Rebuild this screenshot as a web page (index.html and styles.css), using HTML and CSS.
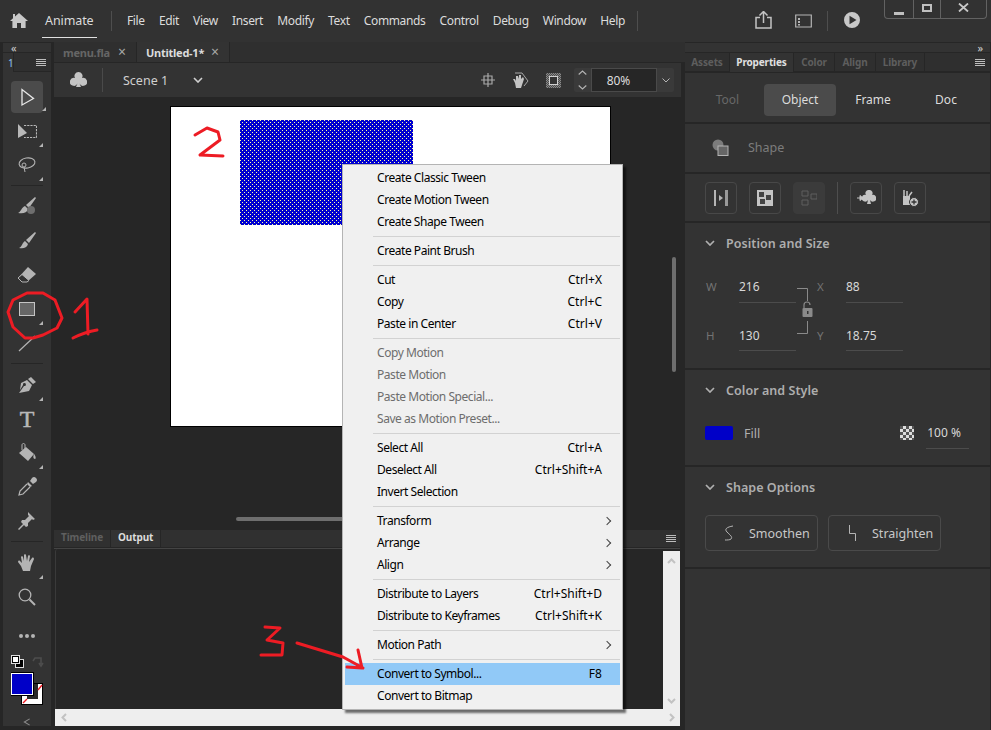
FILE: index.html
```html
<!DOCTYPE html>
<html lang="en">
<head>
<meta charset="utf-8">
<title>Animate</title>
<link rel="stylesheet" href="styles.css">
</head>
<body>
<div class="app">
  <header class="topbar">
    <svg class="home" viewBox="0 0 18 15"><path d="M9 0 L18 8 L15.6 8 L15.6 15 L11 15 L11 10 L7 10 L7 15 L2.4 15 L2.4 8 L0 8 L3 5.3 L3 1 L5 1 L5 3.5 Z"/></svg>
    <div class="brand">Animate</div>
    <span class="vsep first"></span>
    <nav class="menubar">
      <span>File</span><span>Edit</span><span>View</span><span>Insert</span><span>Modify</span><span>Text</span><span>Commands</span><span>Control</span><span>Debug</span><span>Window</span><span>Help</span>
    </nav>
    <span class="vsep"></span>
    <div class="top-right">
      <svg class="ic-share" viewBox="0 0 17 18"><path d="M8.5 0.5 L12.5 4.5 M8.5 0.5 L4.5 4.5 M8.5 1 V12 M5 6.5 H1 V17 H16 V6.5 H12" fill="none" stroke="#c4c4c4" stroke-width="1.5"/></svg>
      <svg class="ic-panel" viewBox="0 0 17 14"><path d="M.7 1 H16.3 V13 H.7 Z" fill="none" stroke="#b4b4b4" stroke-width="1.2"/><path d="M3 4 H5 V6 H3 Z M3 7 H5 V9 H3 Z M3 10 H5 V11.5 H3 Z" fill="#b4b4b4"/></svg>
      <span class="vsep short"></span>
      <svg class="ic-play" viewBox="0 0 16 16"><path fill-rule="evenodd" d="M8 0 A8 8 0 1 1 8 16 A8 8 0 1 1 8 0 Z M5.5 3.8 V12.2 L12.5 8 Z" fill="#c8c8c8"/></svg>
      <div class="winctl">
        <span class="wbtn w-min"><i></i></span>
        <span class="wbtn w-max"><i></i></span>
        <span class="wbtn w-close"><svg viewBox="0 0 11 9" width="11" height="9"><path d="M1 .5 L10 8.5 M10 .5 L1 8.5" stroke="#c8c8c8" stroke-width="1.8" fill="none"/></svg></span>
      </div>
    </div>
  </header>

  <aside class="toolbar">
    <div class="collapse-row left">&#171;</div>
    <div class="tool-tabs"><span class="tool-tab">1</span><span class="tool-tabrest"><i class="burger"></i></span></div>
    <div class="tools">
      <div class="tool sel more"><span class="pill"><svg viewBox="0 0 20 20"><path d="M5 2.5 V18 L16.5 11.5 Z" fill="none" stroke="#e8e8e8" stroke-width="1.3"/></svg></span></div>
      <div class="tool more"><svg viewBox="0 0 20 20"><path d="M1 3 L10 12 L1 17 Z" fill="#b8b8b8"/><path d="M7 4.500 H19.500 V16.500 H7" fill="none" stroke="#b8b8b8" stroke-width="1.1" stroke-dasharray="2.200 1"/></svg></div>
      <div class="tool more"><svg viewBox="0 0 20 20"><ellipse cx="10" cy="8" rx="8" ry="5" transform="rotate(-10 10 8)" fill="none" stroke="#b4b4b4" stroke-width="1.1"/><circle cx="7" cy="10" r="2" fill="none" stroke="#b4b4b4"/><path d="M7 12 L8 17" stroke="#b4b4b4" fill="none"/></svg></div>
      <div class="tool-sep"></div>
      <div class="tool"><svg viewBox="0 0 20 20"><path d="M18 0 L19 1 L12 11 L9 8 Z M8 9 L11 12 C10 16 6 17 1 16 C4 15 4 11 8 9 Z" fill="#b4b4b4"/><circle cx="14" cy="13" r="4" fill="#6e6e6e"/></svg></div>
      <div class="tool"><svg viewBox="0 0 20 20"><path d="M18 1 L19 2 L12 12 L9 9 Z M8 10 L11 13 C10 17 6 18 2 17 C5 16 5 12 8 10 Z" fill="#b4b4b4"/></svg></div>
      <div class="tool"><svg viewBox="0 0 20 20"><path d="M11 2 L19 9 L10 17 L5 17 L1 13 Z" fill="#b4b4b4"/><path d="M5 9.5 L12 15.5 L10 17 L5 17 L1 13 Z" fill="#323232" stroke="#b4b4b4"/></svg></div>
      <div class="tool more"><span class="rect-ic"></span></div>
      <div class="tool"><svg viewBox="0 0 20 20"><path d="M2 18 L18 3" stroke="#b4b4b4" stroke-width="1.2" fill="none"/></svg></div>
      <div class="tool-sep"></div>
      <div class="tool more"><svg viewBox="0 0 20 20"><path d="M14 2 L19 7 L16 9 L11 4 Z M10 5 L15 10 L12 16 L2 18 L7 11 A1.5 1.5 0 1 0 6 10 L3 15 L4 8 Z" fill="#b4b4b4"/></svg></div>
      <div class="tool"><span class="t-ic">T</span></div>
      <div class="tool more"><svg viewBox="0 0 20 20"><path d="M2 10 L9 4 L17 11 L11 18 Z" fill="#b4b4b4"/><path d="M5 7 L5 2 C5 0 8 0 8 2 L8 6" stroke="#b4b4b4" fill="none"/><path d="M17 11 C19 13 19 16 18 16 C16 16 16 13 17 11 Z" fill="#b4b4b4"/></svg></div>
      <div class="tool"><svg viewBox="0 0 20 20"><path d="M15 1 A2 2 0 0 1 19 5 L16 7 L13 4 Z M11 5 L15 9 L13 10 L10 7 Z" fill="#b4b4b4"/><path d="M10 7 L3 14 L2 18 L6 17 L13 10" fill="none" stroke="#b4b4b4" stroke-width="1.2"/></svg></div>
      <div class="tool"><svg viewBox="0 0 20 20"><path d="M11 1 L18 8 L16 9 L15 8 L11 12 L11 15 L9 16 L4 11 L5 9 L8 9 L12 5 L11 4 Z M6 13 L7 14 L2 19 L1 18 Z" fill="#b4b4b4"/></svg></div>
      <div class="tool-sep"></div>
      <div class="tool more"><svg viewBox="0 0 20 20"><path d="M4 13 L1 9 C1 8 2 7 3 8 L5 10 L4 4 C4 3 6 3 6 4 L7 8 L7 2 C7 1 9 1 9 2 L10 8 L11 3 C11 2 13 2 13 3 L12 9 L15 5 C16 4 17 5 17 6 L14 13 L13 18 L6 18 Z" fill="#b4b4b4"/></svg></div>
      <div class="tool"><svg viewBox="0 0 20 20"><circle cx="8" cy="8" r="5.8" fill="none" stroke="#b4b4b4" stroke-width="1.3"/><path d="M12.5 12.5 L18 18" stroke="#b4b4b4" stroke-width="2" fill="none"/></svg></div>
      <div class="tool dots"><i></i><i></i><i></i></div>
    </div>
    <div class="swatches">
      <svg viewBox="0 0 34 52" width="34" height="52">
        <rect x="4.5" y="4.500" width="8" height="8" fill="#000" stroke="#ddd"/>
        <rect x="0.5" y="0.5" width="8" height="8" fill="#000" stroke="#ddd"/>
        <rect x="2" y="2" width="5" height="5" fill="#fff"/>
        <path d="M22 6 L24 3 H30 V9 M28 8 L30 11 L32 8" fill="none" stroke="#4d4d4d" stroke-width="1.6"/>
        <rect x="10.5" y="28.5" width="21" height="21" fill="none" stroke="#000"/>
        <path d="M11 29 H31 V49 H11 Z M16 29 V44 H27 V29 Z" fill="#fff" fill-rule="evenodd"/>
        <rect x="16" y="29" width="11" height="15" fill="#2a2a2a"/>
        <path d="M27 35 L31 30 M12 48 L16 44" stroke="#ed1c24" stroke-width="1.4"/>
        <rect x="0.5" y="18.5" width="21" height="21" fill="#0000c8" stroke="#fff"/>
        <rect x="-.5" y="17.5" width="23" height="23" fill="none" stroke="#000"/>
      </svg>
    </div>
    <svg class="expand" viewBox="0 0 8 9"><path d="M7 1 L1 4.5 L7 8" fill="none" stroke="#8a8a8a" stroke-width="1.2"/></svg>
  </aside>

  <main class="center">
    <div class="doc-tabs">
      <span class="doc-tab"><b>menu.fla</b><em>&#215;</em></span>
      <span class="doc-tab on"><b>Untitled-1*</b><em>&#215;</em></span>
    </div>
    <div class="scenebar">
      <svg class="club" viewBox="0 0 17 17"><path d="M8.5 0 A4 4 0 0 1 12 6 A4 4 0 1 1 9.5 11.5 L11 15 H6 L7.5 11.5 A4 4 0 1 1 5 6 A4 4 0 0 1 8.5 0 Z" fill="#c4c4c4"/></svg>
      <span class="vsep scene-sep"></span>
      <span class="scene-name">Scene 1</span>
      <svg class="chev scene-chev" viewBox="0 0 10 6"><path d="M1 1 L5 5 L9 1" fill="none" stroke="#d0d0d0" stroke-width="1.6"/></svg>
      <div class="scene-right">
        <svg class="sb-ic" viewBox="0 0 14 14"><path d="M3 3 H11 V11 H3 Z M7 0 V14 M0 7 H14" fill="none" stroke="#a8a8a8" stroke-width="1.2"/></svg>
        <svg class="sb-ic wide" viewBox="0 0 17 17"><path d="M3 1 H10 L16 9 L12 14" fill="none" stroke="#a8a8a8"/><path d="M3 11 L1 7 L3 7 L4 9 L4 4 L6 4 L7 7 L7 3 L9 3 L9 7 L11 5 L12 7 L10 13 L9 16 L4 16 Z" fill="#c4c4c4"/></svg>
        <span class="clip-ic"><i></i></span>
        <div class="zoom">
          <span class="zoom-step"><svg viewBox="0 0 9 20" width="9" height="20"><path d="M.7 4.5 L4.5 1 L8.3 4.5 M.7 15.5 L4.5 19 L8.3 15.5" fill="none" stroke="#b4b4b4" stroke-width="1.1"/></svg></span>
          <span class="zoom-val">80%</span>
          <span class="zoom-drop"><svg viewBox="0 0 8 5" width="8" height="5"><path d="M.5 .5 L4 4 L7.5 .5" fill="none" stroke="#b4b4b4"/></svg></span>
        </div>
      </div>
    </div>
    <div class="canvas">
      <div class="stage"><div class="shape"></div></div>
      <span class="thumb-v"></span>
      <span class="thumb-h"></span>
    </div>
    <div class="bottom">
      <div class="out-tabs">
        <span class="out-tab">Timeline</span>
        <span class="out-tab on">Output</span>
        <i class="burger"></i>
      </div>
      <div class="out-body">
        <div class="out-main">
          <div class="out-dark"></div>
          <div class="sb-v">
            <svg viewBox="0 0 9 6" width="9" height="6"><path d="M1 5 L4.5 1.5 L8 5" fill="none" stroke="#c2c2c2" stroke-width="2"/></svg>
            <svg viewBox="0 0 9 6" width="9" height="6"><path d="M1 1 L4.5 4.5 L8 1" fill="none" stroke="#c2c2c2" stroke-width="2"/></svg>
          </div>
        </div>
        <div class="sb-h">
          <svg viewBox="0 0 6 9" width="6" height="9"><path d="M5 1 L1.5 4.5 L5 8" fill="none" stroke="#c2c2c2" stroke-width="2"/></svg>
          <svg viewBox="0 0 6 9" width="6" height="9"><path d="M1 1 L4.5 4.5 L1 8" fill="none" stroke="#c2c2c2" stroke-width="2"/></svg>
        </div>
      </div>
    </div>
  </main>

  <aside class="props">
    <div class="collapse-row right">&#187;</div>
    <div class="prop-tabs">
      <span class="ptab w-assets">Assets</span>
      <span class="ptab on w-props">Properties</span>
      <span class="ptab w-color">Color</span>
      <span class="ptab w-align">Align</span>
      <span class="ptab w-lib">Library</span>
      <i class="burger"></i>
    </div>
    <section class="sec seg">
      <span class="seg-item dim">Tool</span>
      <span class="seg-item on">Object</span>
      <span class="seg-item">Frame</span>
      <span class="seg-item">Doc</span>
    </section>
    <section class="sec kind">
      <svg viewBox="0 0 17 17" width="17" height="17"><circle cx="6" cy="6" r="5.5" fill="#7c7c7c"/><rect x="6" y="7" width="10" height="9.5" fill="#666" stroke="#b4b4b4"/></svg>
      <span>Shape</span>
    </section>
    <section class="sec actions">
      <span class="act"><svg viewBox="0 0 16 16" width="16" height="16"><path d="M1 0 H3 V16 H1 Z" fill="#b4b4b4"/><path d="M6 5 L10 8 L6 11 Z" fill="#b4b4b4"/><path d="M12 0 H15 V16 H12 Z" fill="#999"/></svg></span>
      <span class="act"><svg viewBox="0 0 16 16" width="16" height="16"><rect width="16" height="16" fill="#c4c4c4"/><rect x="2" y="2" width="5" height="5" fill="#444"/><rect x="9" y="5" width="5" height="5" fill="#444"/><rect x="3" y="9" width="5" height="5" fill="#444"/></svg></span>
      <span class="act off"><svg viewBox="0 0 16 16" width="16" height="16"><path d="M1 1 H7 V6 H1 Z M10 4 H16 V9 H10 Z M1 10 H7 V15 H1 Z" fill="none" stroke="#5e5e5e"/></svg></span>
      <span class="act-sep"></span>
      <span class="act"><svg viewBox="0 0 19 16" width="19" height="16"><path d="M12 0 A3.2 3.2 0 0 1 15 5 A3.4 3.4 0 1 1 13 10 L14 14 H10 L11 10 A3.4 3.4 0 1 1 9 5 A3.2 3.2 0 0 1 12 0 Z" fill="#c4c4c4"/><path d="M0 8 H4 M3 5.5 L6 8 L3 10.5 Z" fill="#c4c4c4" stroke="#c4c4c4"/></svg></span>
      <span class="act"><svg viewBox="0 0 18 18" width="18" height="18"><path d="M2 7 H9 V16 H2 Z" fill="#c4c4c4"/><path d="M3 7 V1 M6 7 V2 M8 7 L11 3" stroke="#c4c4c4" stroke-width="1.5" fill="none"/><circle cx="13" cy="13" r="4.5" fill="#c4c4c4" stroke="#333"/><path d="M10.5 13 H15.5 M13 10.5 V15.5" stroke="#333" stroke-width="1.3"/></svg></span>
    </section>
    <section class="sec pos">
      <h3 class="sec-title"><svg class="chev small" viewBox="0 0 10 6"><path d="M1 1 L5 5 L9 1" fill="none" stroke="#b0b0b0" stroke-width="1.7"/></svg>Position and Size</h3>
      <div class="fields">
        <span class="lbl">W</span><span class="val">216</span>
        <span class="link"><svg viewBox="0 0 18 48" width="18" height="48"><path d="M1 .5 H11.5 V13 M11.5 33 V45.5 H1" fill="none" stroke="#8a8a8a"/><path d="M8 20 V17 A3 3 0 0 1 14 17" fill="none" stroke="#8a8a8a" stroke-width="1.2"/><rect x="6.500" y="20" width="10" height="9" rx="1" fill="#8a8a8a"/><rect x="11" y="23" width="1.500" height="3" fill="#333"/></svg></span>
        <span class="lbl">X</span><span class="val">88</span>
        <span class="lbl">H</span><span class="val">130</span>
        <span class="lbl">Y</span><span class="val">18.75</span>
      </div>
    </section>
    <section class="sec style">
      <h3 class="sec-title"><svg class="chev small" viewBox="0 0 10 6"><path d="M1 1 L5 5 L9 1" fill="none" stroke="#b0b0b0" stroke-width="1.7"/></svg>Color and Style</h3>
      <div class="fill-row">
        <span class="fill-sw"></span>
        <span class="fill-lbl">Fill</span>
        <span class="alpha-ic"></span>
        <span class="alpha-val">100 %</span>
      </div>
    </section>
    <section class="sec opts">
      <h3 class="sec-title"><svg class="chev small" viewBox="0 0 10 6"><path d="M1 1 L5 5 L9 1" fill="none" stroke="#b0b0b0" stroke-width="1.7"/></svg>Shape Options</h3>
      <div class="opt-row">
        <span class="opt"><svg viewBox="0 0 10 16" width="10" height="16"><path d="M9 1 C3 2 0 4 3 7 C6 10 9 12 7 14 C6 15 3 15 1 15" fill="none" stroke="#b4b4b4"/></svg>Smoothen</span>
        <span class="opt"><svg viewBox="0 0 10 16" width="10" height="16"><path d="M2.500 0 V8.500 H8.500 V16" fill="none" stroke="#b4b4b4"/></svg>Straighten</span>
      </div>
    </section>
    <section class="sec rest"></section>
  </aside>

  <div class="ctx">
    <div class="mi">Create Classic Tween</div>
    <div class="mi">Create Motion Tween</div>
    <div class="mi">Create Shape Tween</div>
    <hr>
    <div class="mi">Create Paint Brush</div>
    <hr>
    <div class="mi">Cut<kbd>Ctrl+X</kbd></div>
    <div class="mi">Copy<kbd>Ctrl+C</kbd></div>
    <div class="mi">Paste in Center<kbd>Ctrl+V</kbd></div>
    <hr>
    <div class="mi off">Copy Motion</div>
    <div class="mi off">Paste Motion</div>
    <div class="mi off">Paste Motion Special...</div>
    <div class="mi off">Save as Motion Preset...</div>
    <hr>
    <div class="mi">Select All<kbd>Ctrl+A</kbd></div>
    <div class="mi">Deselect All<kbd>Ctrl+Shift+A</kbd></div>
    <div class="mi">Invert Selection</div>
    <hr>
    <div class="mi sub">Transform</div>
    <div class="mi sub">Arrange</div>
    <div class="mi sub">Align</div>
    <hr>
    <div class="mi">Distribute to Layers<kbd>Ctrl+Shift+D</kbd></div>
    <div class="mi">Distribute to Keyframes<kbd>Ctrl+Shift+K</kbd></div>
    <hr>
    <div class="mi sub">Motion Path</div>
    <hr>
    <div class="mi hot">Convert to Symbol...<kbd>F8</kbd></div>
    <div class="mi">Convert to Bitmap</div>
  </div>

  <svg class="ink" viewBox="0 0 991 730" width="991" height="730">
    <path d="M33 338 L25 338 L13 327 L8 312 L13 300 L27 293 L43 293 L55 300 L62 318 L57 328 L43 335 L33 338"/>
    <path d="M75 312 L87 299 L88 334 M73 338 Q85 332 97 330"/>
    <path d="M195 135 L207 128 L218 132 L220 140 L200 155 L223 156"/>
    <path d="M265 627 L280 628 L267 640 L283 643 L282 655 L261 655"/>
    <path d="M297 643 L320 650 L343 657 L363 668 M358 650 L362 668 L347 667"/>
  </svg>
</div>
</body>
</html>
```
FILE: styles.css
```css
* { box-sizing: border-box; }
html, body { margin: 0; padding: 0; overflow: hidden; }
body { font-family: "Noto Sans", "Open Sans", sans-serif; font-size: 12px; color: #d8d8d8; }

.app {
  position: relative;
  width: 991px;
  height: 730px;
  overflow: hidden;
  background: #262626;
  display: grid;
  grid-template-columns: 54px 631px 306px;
  grid-template-rows: 42px 688px;
}

/* top bar */
.topbar { grid-column: 1 / 4; display: flex; align-items: flex-start; background: #323232; height: 42px; }
.home { width: 18px; height: 15px; margin: 13px 0 0 10px; fill: #c8c8c8; flex: none; }
.brand { margin-left: 14px; width: 55px; height: 38px; padding: 12px 0 0 3px; font-size: 12.5px; letter-spacing: -.1px; color: #dcdcdc; border-bottom: 1px solid #e0e0e0; }
.vsep { flex: none; width: 1px; height: 20px; background: #4e4e4e; margin-top: 11px; }
.vsep.first { margin-left: 14px; }
.menubar { display: flex; margin-left: 15px; width: 498px; margin-right: 12px; padding-top: 12px; justify-content: space-between; letter-spacing: -.38px; color: #dcdcdc; }
.top-right { position: relative; flex: 1; display: flex; align-items: flex-start; }
.ic-share { width: 17px; height: 18px; margin: 11px 0 0 117px; }
.ic-panel { width: 17px; height: 14px; margin: 14px 0 0 23px; }
.vsep.short { margin-left: 15px; }
.ic-play { width: 16px; height: 16px; margin: 12px 0 0 16px; }
.winctl { display: flex; height: 19px; margin-left: 24px; border: 1px solid #626262; border-top: 0; border-radius: 0 0 4px 4px; }
.wbtn { display: flex; align-items: center; justify-content: center; height: 18px; border-left: 1px solid #626262; }
.wbtn:first-child { border-left: 0; }
.w-min { width: 28px; }
.w-min i { width: 10px; height: 3px; background: #c0c0c0; margin-top: 8px; }
.w-max { width: 27px; }
.w-max i { width: 10px; height: 8px; border: 2px solid #c0c0c0; margin-top: -2px; }
.w-close { width: 46px; }
.w-close svg { margin-top: -3px; }

/* left toolbar */
.toolbar { position: relative; width: 48px; margin: 1px 0 4px 3px; background: #333; border-left: 0; display: flex; flex-direction: column; }
.collapse-row { height: 10px; font-size: 11px; line-height: 9px; color: #cfcfcf; border-bottom: 1px solid #262626; flex: none; }
.collapse-row.left { padding-left: 8px; }
.collapse-row.right { padding-right: 7px; text-align: right; background: #333; }
.tool-tabs { display: flex; height: 19px; flex: none; }
.tool-tab { width: 10px; color: #8fc4f0; font-size: 10px; line-height: 14px; padding: 3px 0 0 5px; overflow: hidden; }
.tool-tabrest { flex: 1; display: flex; justify-content: flex-end; align-items: center; background: #2f2f2f; border-left: 1px solid #262626; border-bottom: 1px solid #262626; padding-right: 5px; }
.burger { display: block; width: 10px; height: 7px; flex: none; background: repeating-linear-gradient(#bdbdbd 0 1px, transparent 1px 2px); }
.tools { padding-top: 8px; flex: none; }
.tool { position: relative; height: 34px; display: flex; align-items: center; justify-content: center; }
.tool svg { width: 20px; height: 20px; }
.tool.more::after { content: ""; position: absolute; right: 8px; bottom: 1px; border-style: solid; border-width: 0 0 4px 4px; border-color: transparent transparent #b4b4b4 transparent; }
.tool.sel.more::after { right: 5px; bottom: 3px; }
.pill { width: 32px; height: 32px; border-radius: 4px; background: #4b4b4b; display: flex; align-items: center; justify-content: center; }
.rect-ic { width: 16px; height: 14px; background: #666; border: 1px solid #c4c4c4; }
.t-ic { font-family: "Liberation Serif", serif; font-weight: 400; font-size: 24px; line-height: 1; color: #b8b8b8; -webkit-text-stroke: .5px #b8b8b8; }
.tool-sep { height: 8px; padding: 3px 4px 4px; background-clip: content-box; background-color: #262626; margin: 0 4px; }
.dots { margin-top: 5px; gap: 2px; }
.dots i { width: 4px; height: 4px; border-radius: 50%; background: #b4b4b4; }
.swatches { padding: 0 0 0 8px; margin-top: 2px; line-height: 0; }
.expand { width: 8px; height: 9px; margin: 11px 0 0 20px; }

/* center */
.center { display: flex; flex-direction: column; min-width: 0; }
.doc-tabs { height: 21px; flex: none; display: flex; background: #2f2f2f; border-bottom: 1px solid #262626; }
.doc-tab { display: flex; align-items: center; justify-content: space-between; height: 20px; padding: 0 10px 0 9px; border-right: 1px solid #262626; width: 83px; color: #666; }
.doc-tab.on { width: 93px; color: #dcdcdc; background: #333; }
.doc-tab b { font-size: 11px; font-weight: 700; letter-spacing: -.25px; }
.doc-tab em { font-style: normal; font-size: 14px; line-height: 1; color: #a8a8a8; }
.scenebar { height: 34px; flex: none; width: 627px; display: flex; align-items: center; background: #333; }
.club { width: 17px; height: 17px; margin-left: 16px; flex: none; }
.vsep.scene-sep { margin: 0 0 0 15px; height: 24px; background: #4a4a4a; }
.scene-name { margin-left: 20px; font-size: 12.5px; color: #d0d0d0; }
.chev { display: block; flex: none; }
.scene-chev { width: 10px; height: 6px; margin-left: 25px; }
.scene-right { margin-left: auto; display: flex; align-items: center; padding-right: 7px; }
.sb-ic { width: 14px; height: 14px; margin-right: 17px; }
.sb-ic.wide { width: 17px; height: 17px; }
.clip-ic { width: 15px; height: 15px; margin-right: 13px; background: repeating-conic-gradient(#8a8a8a 0 25%, #4a4a4a 0 50%) 0 0 / 2px 2px; display: flex; align-items: center; justify-content: center; }
.clip-ic i { width: 9px; height: 9px; border: 1px solid #d0d0d0; background: #333; }
.zoom { display: flex; align-items: center; height: 24px; background: #3a3a3a; border-radius: 2px; }
.zoom-step { width: 17px; display: flex; justify-content: center; }
.zoom-val { width: 66px; height: 24px; background: #262626; border: 1px solid #4a4a4a; text-align: center; padding-right: 11px; line-height: 24px; font-size: 12px; color: #ddd; }
.zoom-drop { width: 17px; display: flex; justify-content: center; }
.canvas { position: relative; height: 430px; flex: none; padding: 9px 0 0 116px; background: #262626; }
.stage { width: 441px; height: 321px; background: #fff; border: 1px solid #000; padding: 13px 0 0 69px; }
.shape {
  width: 173px; height: 105px;
  background-color: #0000d0;
  background-image: conic-gradient(at 1px 1px, transparent 75%, #ffffa8 0), conic-gradient(at 1px 1px, transparent 75%, #ffffa8 0);
  background-size: 4px 4px;
  background-position: 0 0, 2px 2px;
}
.thumb-v { position: absolute; left: 618px; top: 160px; width: 4px; height: 115px; border-radius: 2px; background: #6e6e6e; }
.thumb-h { position: absolute; left: 182px; top: 420px; width: 180px; height: 4px; border-radius: 2px; background: #6e6e6e; }
.bottom { flex: 1; display: flex; flex-direction: column; padding-top: 3px; }
.out-tabs { display: flex; align-items: center; height: 17px; width: 626px; flex: none; background: #303030; padding-right: 4px; }
.out-tab { display: block; height: 17px; line-height: 15px; font-size: 10px; font-weight: 700; color: #5f5f5f; width: 57px; padding-left: 7px; border-right: 1px solid #262626; letter-spacing: -.1px; }
.out-tab.on { width: 50px; color: #dcdcdc; background: #333; }
.out-tabs .burger { margin-left: auto; }
.out-body { width: 626px; margin-top: 1px; padding-left: 1px; border-top: 1px solid #444; height: 178px; display: flex; flex-direction: column; }
.out-main { flex: 1; display: flex; margin-top: 0; }
.out-dark { flex: 1; background: #262626; border-radius: 3px 0 0 0; border-left: 1px solid #3a3a3a; }
.sb-v { width: 17px; margin-top: 2px; background: #eee; display: flex; flex-direction: column; justify-content: space-between; align-items: center; padding: 7px 0 5px; }
.sb-h { height: 17px; background: #eee; display: flex; justify-content: space-between; align-items: center; padding: 0 5px 0 6px; }

/* properties */
.props { margin: 1px 1px 0 0; display: flex; flex-direction: column; gap: 2px; background: #262626; }
.props .collapse-row { margin-bottom: -2px; }
.prop-tabs { display: flex; height: 19px; flex: none; margin-bottom: -1px; align-items: flex-start; background: #2f2f2f; border-bottom: 1px solid #262626; padding-right: 5px; }
.ptab { height: 18px; font-size: 10px; font-weight: 700; line-height: 18px; color: #5e5e5e; text-align: center; border-right: 1px solid #262626; letter-spacing: -.15px; }
.ptab.on { color: #e0e0e0; background: #333; height: 19px; }
.w-assets { width: 45px; }
.w-props { width: 64px; }
.w-color { width: 41px; }
.w-align { width: 41px; }
.w-lib { width: 49px; }
.prop-tabs .burger { margin: 6px 0 0 auto; }
.sec { background: #333; flex: none; }
.seg { height: 49px; position: relative; display: flex; align-items: center; padding: 4px 0 0 7px; }
.seg-item { width: 72px; height: 32px; margin-right: 1px; line-height: 32px; text-align: center; border-radius: 4px; font-size: 12px; color: #dcdcdc; }
.seg-item.dim { color: #686868; width: 71px; margin-right: 1px; }
.seg-item.on { background: #4b4b4b; }
.kind { height: 48px; display: flex; align-items: center; gap: 19px; padding: 0 0 2px 27px; color: #7c7c7c; font-size: 12.5px; }
.actions { height: 47px; display: flex; align-items: center; gap: 12px; padding-left: 20px; }
.act { width: 32px; height: 32px; border: 1px solid #484848; border-radius: 4px; display: flex; align-items: center; justify-content: center; }
.act.off { background: #3b3b3b; border-color: #3b3b3b; }
.act-sep { width: 1px; height: 32px; background: #4e4e4e; margin: 0 0; }
.sec-title { display: flex; align-items: center; gap: 11px; margin: 0; padding: 0 0 0 20px; height: 40px; font-size: 12.5px; font-weight: 600; color: #aeaeae; letter-spacing: .05px; }
.chev.small { width: 10px; height: 6px; }
.pos { height: 145px; }
.fields { display: grid; grid-template-columns: 33px 57px 21px 29px 57px; grid-template-rows: 33px 32px; row-gap: 16px; margin: 7px 0 0 21px; }
.lbl { color: #727272; font-size: 11.5px; line-height: 33px; }
.val { color: #d8d8d8; font-size: 12px; line-height: 33px; border-bottom: 1px solid #4c4c4c; }
.link { grid-row: 1 / 3; grid-column: 3; line-height: 0; padding-top: 18px; }
.style { height: 95px; }
.fill-row { display: flex; align-items: center; margin: 16px 0 0 20px; height: 14px; }
.fill-sw { width: 28px; height: 14px; background: #0000c8; border-radius: 2px; }
.fill-lbl { margin-left: 11px; color: #b0b0b0; font-size: 12.5px; }
.alpha-ic { width: 14px; height: 14px; margin-left: 140px; background: repeating-conic-gradient(#ddd 0 25%, #555 0 50%) 0 0 / 6px 6px; }
.alpha-val { width: 43px; margin-left: 12px; height: 23px; align-self: flex-start; padding-left: 1px; line-height: 14px; border-bottom: 1px solid #4c4c4c; color: #d8d8d8; white-space: nowrap; }
.opts { height: 100px; }
.opt-row { display: flex; gap: 10px; margin: 8px 0 0 20px; }
.opt { width: 113px; height: 36px; border: 1px solid #4a4a4a; border-radius: 4px; display: flex; align-items: center; padding-left: 18px; gap: 15px; font-size: 12.5px; color: #c8c8c8; }
.rest { flex: 1; }

/* context menu */
.ctx { position: absolute; left: 342px; top: 164px; width: 281px; height: 546px; padding: 2px 2px 0 2px; background: #f0f0f0; border: 1px solid #b4b4b4; box-shadow: 3px 3px 2px rgba(0,0,0,.55); color: #000; font-size: 12px; letter-spacing: -.45px; }
.mi { position: relative; height: 22px; line-height: 21px; padding: 0 18px 0 32px; display: flex; justify-content: space-between; white-space: nowrap; }
.mi.off { color: #6d6d6d; }
.mi.hot { background: #91c9f7; }
.mi kbd { font: inherit; letter-spacing: .02px; }
.mi.sub::after { content: ""; position: absolute; right: 10px; top: 8px; width: 5px; height: 5px; border-top: 1px solid #444; border-right: 1px solid #444; transform: rotate(45deg); }
.ctx hr { height: 1px; border: 0; margin: 3px 0 3px 28px; background: #d2d2d2; }

/* hand-drawn annotations */
.ink { position: absolute; left: 0; top: 0; pointer-events: none; }
.ink path { fill: none; stroke: #ed1c24; stroke-width: 3; stroke-linejoin: round; stroke-linecap: round; }
```
